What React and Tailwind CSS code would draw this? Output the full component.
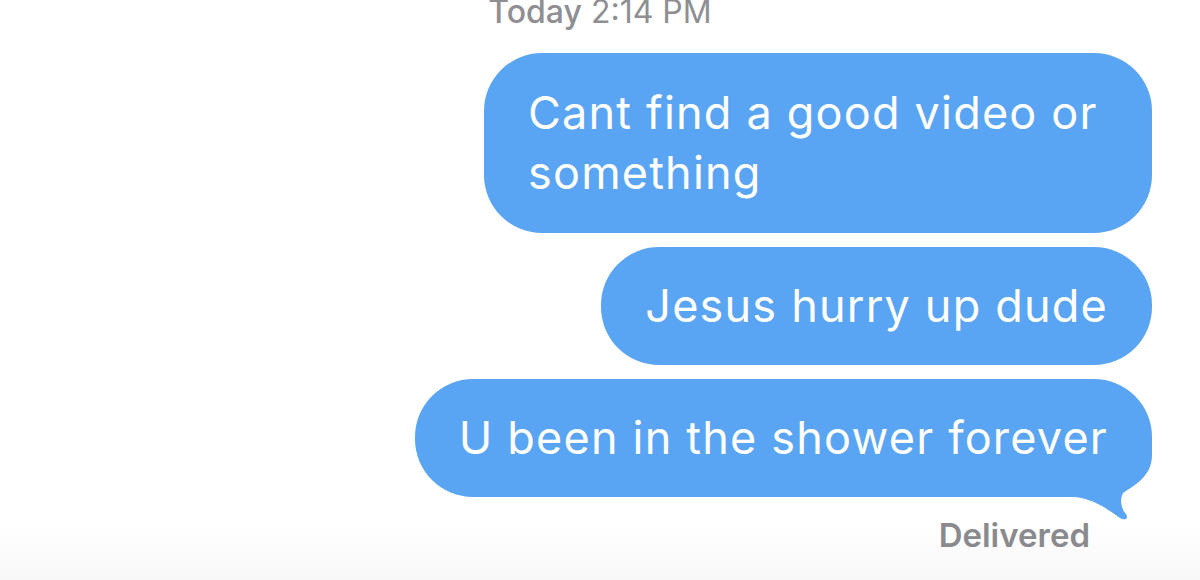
import React from "react";

const messages = [
    "Cant find a good video or something",
    "Jesus hurry up dude",
    "U been in the shower forever",
];

function Tail() {
    return (
        <svg
            className="absolute -right-[8px] -bottom-[24px]"
            width="90"
            height="80"
            viewBox="0 0 90 80"
        >
            <path
                d="M0 0 L82 0 L82 14 C82 36 63 45 53 52 C49 60 52 69 56 73 C59 77 55 80 50 77 C40 70 25 58 5 56 L0 56 Z"
                fill="#5aa5f3"
            />
        </svg>
    );
}

export default function App() {
    return (
        <div
            className="relative h-[580px] w-[1200px] overflow-hidden bg-white"
            style={{ fontFamily: "Inter, 'Liberation Sans', sans-serif" }}
        >
            <div className="absolute inset-x-0 bottom-0 h-[60px] bg-gradient-to-b from-white to-[#f8f8f8]"></div>
            <div className="relative flex flex-col">
                <div className="-mt-[8px] w-full text-center text-[32px] leading-[40px] text-[#8e8e93]">
                    <span className="font-medium">Today</span> 2:14 PM
                </div>
                <div className="mt-[21px] flex flex-col items-end gap-[14px] pr-[48px]">
                    {messages.map((m, i) => (
                        <div
                            key={i}
                            className={`relative rounded-[58px] bg-[#5aa5f3] px-[44px] text-[45px] leading-[60px] tracking-[1.2px] text-white ${
                                i === 0 ? "w-[668px] py-[30px]" : "py-[29px]"
                            }`}
                        >
                            {i === messages.length - 1 && <Tail />}
                            <span className="relative">{m}</span>
                        </div>
                    ))}
                </div>
                <div className="mt-[18px] flex justify-end pr-[110px]">
                    <div className="text-[33px] font-semibold leading-[40px] text-[#8a8a8e]">
                        Delivered
                    </div>
                </div>
            </div>
        </div>
    );
}
